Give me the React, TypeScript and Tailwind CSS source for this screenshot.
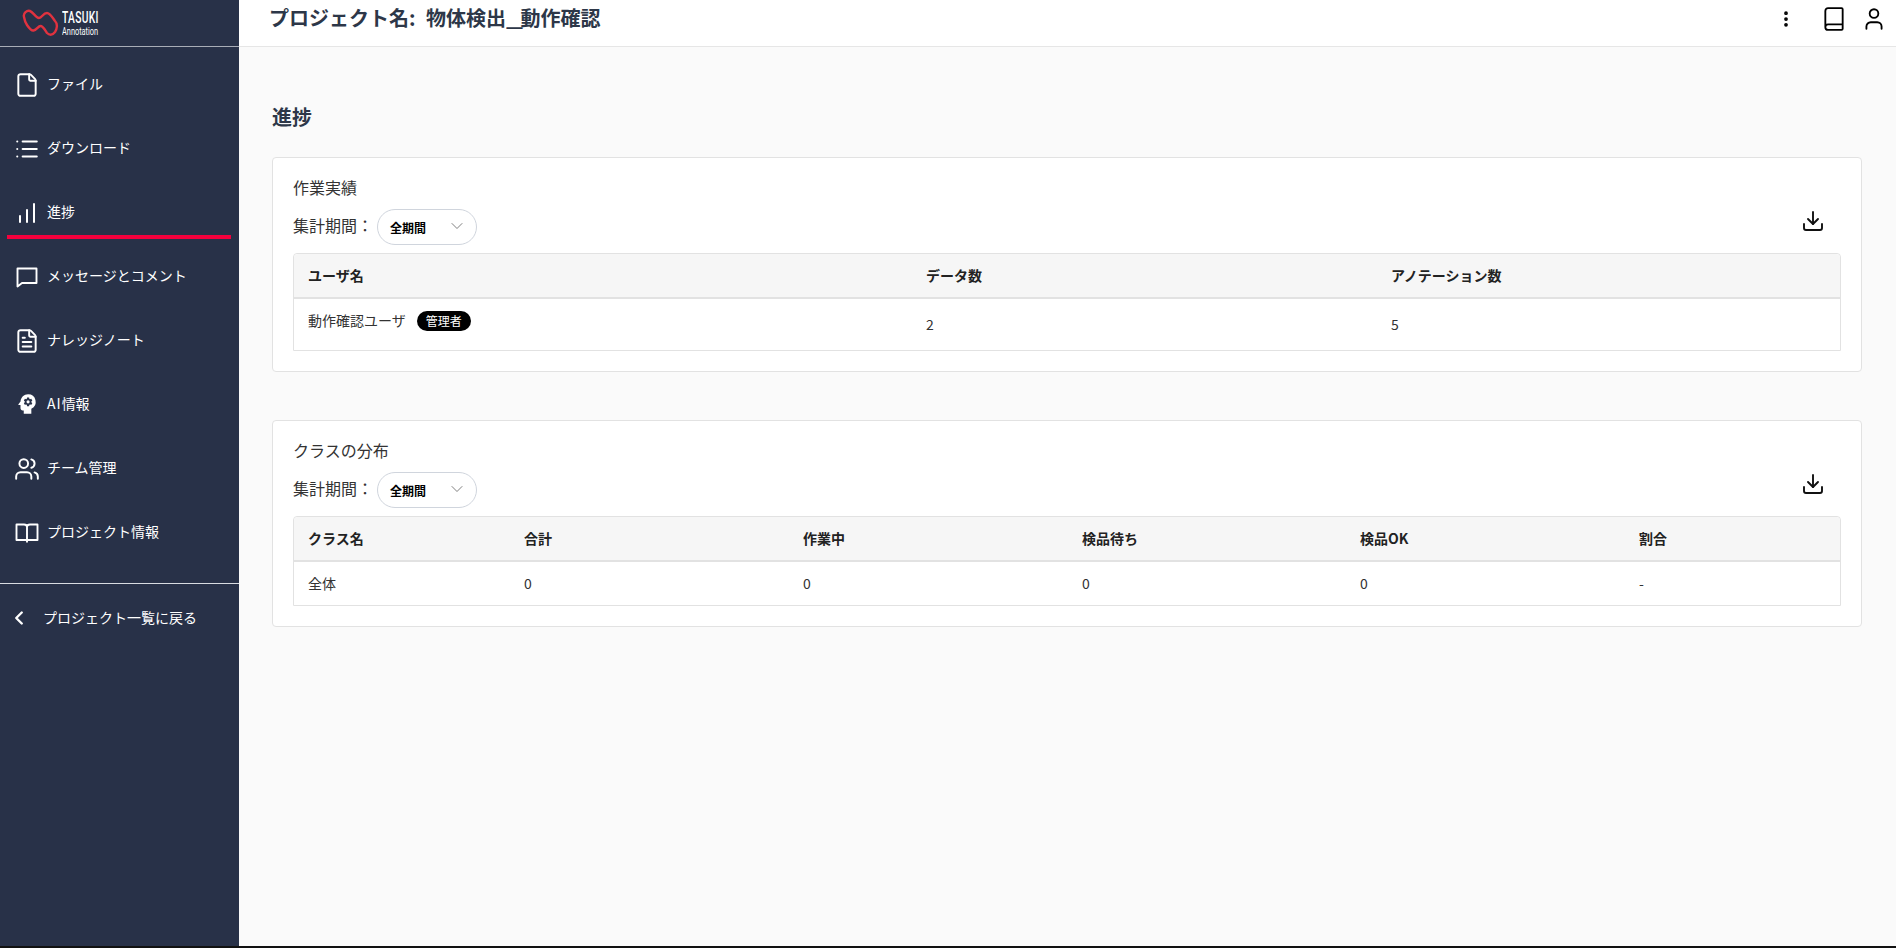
import { ChevronDown, ChevronLeft, File, List, ChartNoAxesColumnIncreasing, FileText, Users, Book, User, Download, MoreVertical } from "lucide-react";
import { MdPsychology } from "react-icons/md";

const FONT = "font-['Noto_Sans_CJK_JP','Noto_Sans',sans-serif]";

function Msg() {
  return (
    <svg width="24" height="24" viewBox="0 0 24 24" fill="none" stroke="#fff" strokeWidth="1.900" strokeLinejoin="round">
      <path d="M2.500 3.500h19v14.500H7L2.500 21.500z" />
    </svg>
  );
}

function Open() {
  return (
    <svg width="24" height="24" viewBox="0 0 24 24" fill="none" stroke="#fff" strokeWidth="1.900" strokeLinejoin="round">
      <path d="M1.500 3.500H9c1.800 0 3 1 3 2.500 0-1.500 1.200-2.500 3-2.500h7.500v15.500H12H1.500zM12 6v15.500" />
    </svg>
  );
}

const nav: [string, any][] = [
  ["ファイル", <File size={26} strokeWidth={1.800} />],
  ["ダウンロード", <List size={26} strokeWidth={1.900} />],
  ["進捗", <ChartNoAxesColumnIncreasing size={24} strokeWidth={2} />],
  ["メッセージとコメント", <Msg />],
  ["ナレッジノート", <FileText size={26} strokeWidth={1.800} />],
  ["AI情報", <MdPsychology size={26} className="mb-[3px]" />],
  ["チーム管理", <Users size={26} strokeWidth={1.800} />],
  ["プロジェクト情報", <Open />],
];

function Logo() {
  return (
    <div className="flex items-center gap-[3px] ml-[22px]">
      <svg width="37" height="28" viewBox="0 0 37 28" fill="none" stroke="#e0323f" strokeWidth="2.400" strokeLinejoin="round" className="shrink-0">
        <path d="M2 8C1 4 5 1 8 2C11 3 14 9 17 9C20 9 21 4 25 4C28 4 30 8 33 12C36 15 35 20 33 23C30 27 27 26 25 24C23 21 21 17 18.500 17C16 17 15 21 11.500 21.500C9 22 7 19 5 16C3 13 2.500 11 2 8Z" />
      </svg>
      <div className="flex flex-col text-white leading-none font-['Roboto',sans-serif]">
        <span className="text-[16px] leading-[16px] font-medium scale-x-[0.64] origin-left tracking-[0.5px]">TASUKI</span>
        <span className="text-[11px] leading-[11px] scale-x-[0.67] origin-left whitespace-nowrap">Annotation</span>
      </div>
    </div>
  );
}

function Sidebar() {
  return (
    <aside className="w-[239px] shrink-0 bg-[#283148] text-white flex flex-col">
      <div className="h-[47px] border-b border-[#a9adb7] flex items-center">
        <Logo />
      </div>
      <nav className="flex flex-col pt-[6px]">
        {nav.map(([label, icon], i) => (
          <div key={label} className="h-[64px] relative flex items-center pl-[16px]">
            <span className="w-[22px] h-[24px] flex items-center justify-center [&>svg]:shrink-0">{icon}</span>
            <span className="ml-[9px] mb-[3px] text-[14px] text-white">
              {label === "AI情報" ? (
                <>
                  <span className="tracking-[1px]">AI</span>情報
                </>
              ) : (
                label
              )}
            </span>
            {i === 2 && <div className="absolute left-[7px] right-[8px] bottom-[6px] h-[4px] bg-[#f5003d]" />}
          </div>
        ))}
      </nav>
      <div className="mt-[18px] border-t border-[#d9dce2] h-[68px] flex items-center pl-[8px]">
        <ChevronLeft size={22} strokeWidth={2.600} />
        <span className="ml-[13px] text-[14px] text-white">プロジェクト一覧に戻る</span>
      </div>
    </aside>
  );
}

function Period() {
  return (
    <div className="flex items-center text-[16px] text-[#333]">
      <span className="mb-[5px]">集計期間：</span>
      <div className="ml-[4px] w-[100px] h-[36px] rounded-full border border-[#d0d5dd] bg-white flex items-center justify-between pl-[12px] pr-[9px]">
        <span className="text-[12px] font-bold text-black mt-[1px]">全期間</span>
        <ChevronDown size={20} strokeWidth={0.900} className="text-[#555] mb-[3px]" />
      </div>
    </div>
  );
}

function Card({ title, children, className }: { title: string; children: any; className: string }) {
  return (
    <section className={`rounded-[4px] border border-[#e2e2e2] bg-white px-[20px] pt-[18px] pb-[20px] ${className}`}>
      <div className="text-[16px] leading-[22px] text-[#333]">{title}</div>
      <div className="flex items-center justify-between mt-[11px] h-[36px] mb-[8px]">
        <Period />
        <Download size={24} strokeWidth={1.900} className="text-[#111] mr-[16px] mb-[12px]" />
      </div>
      {children}
    </section>
  );
}

function Table({ cols, headers, rows }: { cols: string; headers: string[]; rows: any[] }) {
  return (
    <div className="rounded-t-[4px] border border-[#e2e2e2] text-[14px] text-[#333]">
      <div className={`grid ${cols} h-[45px] items-center bg-[#f6f6f6] border-b-2 border-[#e2e2e2] rounded-t-[4px] font-bold text-[#222]`}>
        {headers.map((h) => (
          <div key={h} className="px-[14px]">{h}</div>
        ))}
      </div>
      {rows}
    </div>
  );
}

export default function App() {
  return (
    <div className={`flex h-[948px] w-[1896px] overflow-hidden border-b-2 border-[#111] ${FONT}`}>
      <Sidebar />
      <main className="flex-1 flex flex-col bg-[#fafafa] min-w-0">
        <header className="h-[47px] shrink-0 border-b border-[#e6e6e6] bg-white flex items-center justify-between pl-[30px] pr-[9px]">
          <h1 className="text-[20px] font-bold text-[#2d3748] mb-[10px]">
            プロジェクト名<span className="mr-[6px]">: </span>物体検出<span className="inline-block scale-x-[1.500] origin-left mr-[3px]">_</span>動作確認
          </h1>
          <div className="flex items-center mb-[9px]">
            <MoreVertical size={20} strokeWidth={2.500} className="text-black" />
            <Book size={26} strokeWidth={1.700} className="text-black ml-[25px]" />
            <User size={26} strokeWidth={1.700} className="text-black ml-[14px]" />
          </div>
        </header>
        <div className="pl-[33px] pr-[34px] pt-[56px]">
          <h2 className="text-[20px] leading-[28px] font-bold text-[#2d3748]">進捗</h2>
          <Card title="作業実績" className="mt-[26px]">
            <Table
              cols="grid-cols-[618px_465px_1fr]"
              headers={["ユーザ名", "データ数", "アノテーション数"]}
              rows={[
                <div key="r" className="grid grid-cols-[618px_465px_1fr] h-[51px] items-center">
                  <div className="px-[14px] flex items-center mb-[8px]">
                    動作確認ユーザ
                    <span className="ml-[11px] h-[20px] px-[9px] rounded-full bg-black text-white text-[12px] leading-[20px]">管理者</span>
                  </div>
                  <div className="px-[14px]">2</div>
                  <div className="px-[14px]">5</div>
                </div>,
              ]}
            />
          </Card>
          <Card title="クラスの分布" className="mt-[48px]">
            <Table
              cols="grid-cols-[216px_279px_279px_278px_279px_1fr]"
              headers={["クラス名", "合計", "作業中", "検品待ち", "検品OK", "割合"]}
              rows={[
                <div key="r" className="grid grid-cols-[216px_279px_279px_278px_279px_1fr] h-[43px] items-center">
                  {["全体", "0", "0", "0", "0", "-"].map((c, i) => (
                    <div key={i} className="px-[14px]">{c}</div>
                  ))}
                </div>,
              ]}
            />
          </Card>
        </div>
      </main>
    </div>
  );
}
